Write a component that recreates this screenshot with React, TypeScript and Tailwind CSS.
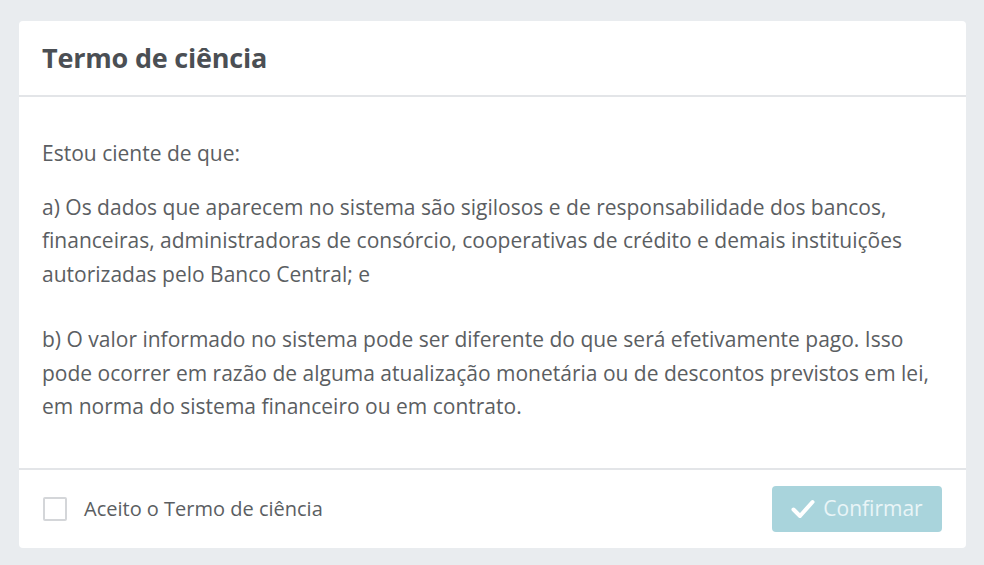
import React from "react";

export default function App() {
  return (
    <div
      className="min-h-screen w-full bg-[#e9ecef] pt-[21px] pb-[17px] pl-[19px] pr-[18px]"
      style={{ fontFamily: '"Open Sans", "Noto Sans", sans-serif' }}
    >
      <div className="flex h-[527px] flex-col rounded-[4px] bg-white">
        <div className="flex h-[76px] items-center border-b-[2px] border-[#e3e5e8] px-[23px]">
          <h1 className="text-[27px] font-bold text-[#4b4f54] tracking-[-0.2px]">Termo de ciência</h1>
        </div>
        <div className="flex-1 px-[23px] pt-[40px] text-[21px] leading-[33.5px] text-[#5b5e62]">
          <p className="mb-[20px]">Estou ciente de que:</p>
          <p className="mb-[32px]">
            a) Os dados que aparecem no sistema são sigilosos e de responsabilidade dos bancos,
            <br />
            financeiras, administradoras de consórcio, cooperativas de crédito e demais instituições
            <br />
            autorizadas pelo Banco Central; e
          </p>
          <p>
            b) O valor informado no sistema pode ser diferente do que será efetivamente pago. Isso
            <br />
            pode ocorrer em razão de alguma atualização monetária ou de descontos previstos em lei,
            <br />
            em norma do sistema financeiro ou em contrato.
          </p>
        </div>
        <div className="flex h-[80px] items-center justify-between border-t-[2px] border-[#e3e5e8] pl-[24px] pr-[24px]">
          <label className="flex items-center gap-[17px] text-[20px] text-[#5b5e62]">
            <span className="block h-[24px] w-[24px] rounded-[2px] border-[2px] border-[#d4d6d9] bg-white" />
            <span>Aceito o Termo de ciência</span>
          </label>
          <button
            disabled
            className="flex h-[46px] w-[170px] items-center justify-center gap-[8px] rounded-[4px] bg-[#a9d4dc] text-[21px] text-[#e9f5f7]"
          >
            <svg width="24" height="20" viewBox="0 0 24 20" fill="none">
              <path d="M2.5 10.5 L9 17 L21.5 3" stroke="#ffffff" strokeWidth="4" strokeLinecap="round" strokeLinejoin="round" />
            </svg>
            <span>Confirmar</span>
          </button>
        </div>
      </div>
    </div>
  );
}
